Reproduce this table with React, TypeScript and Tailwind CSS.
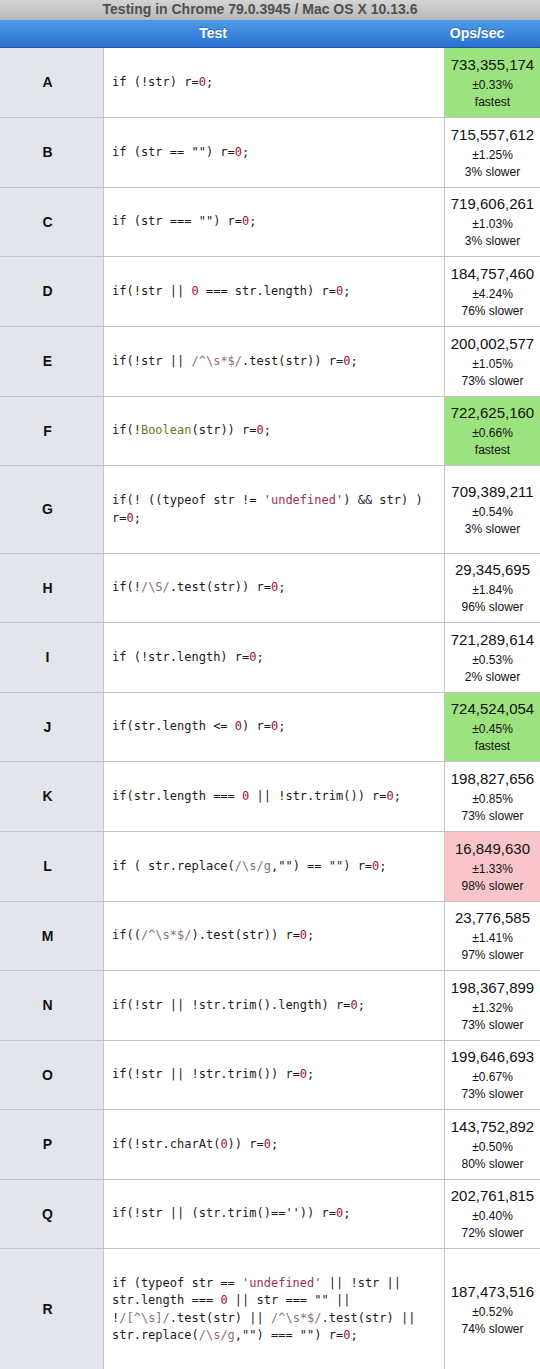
import React from 'react'

type Tok = [string, string?]

type Row = {
  id: string
  h: string
  code: Tok[][]
  ops: string
  err: string
  note: string
  tone?: 'best' | 'worst'
}

const Z = 'z'
const R = 'r'
const S = 's'
const B = 'b'

const rows: Row[] = [
  { id: 'A', h: 'h-[70px]', code: [[['if (!str) r='], ['0', Z], [';']]], ops: '733,355,174', err: '±0.33%', note: 'fastest', tone: 'best' },
  { id: 'B', h: 'h-[70px]', code: [[['if (str == "") r='], ['0', Z], [';']]], ops: '715,557,612', err: '±1.25%', note: '3% slower' },
  { id: 'C', h: 'h-[69px]', code: [[['if (str === "") r='], ['0', Z], [';']]], ops: '719,606,261', err: '±1.03%', note: '3% slower' },
  { id: 'D', h: 'h-[70px]', code: [[['if(!str || '], ['0', Z], [' === str.length) r='], ['0', Z], [';']]], ops: '184,757,460', err: '±4.24%', note: '76% slower' },
  { id: 'E', h: 'h-[70px]', code: [[['if(!str || '], ['/^\\s*$/', R], ['.test(str)) r='], ['0', Z], [';']]], ops: '200,002,577', err: '±1.05%', note: '73% slower' },
  { id: 'F', h: 'h-[69px]', code: [[['if(!'], ['Boolean', B], ['(str)) r='], ['0', Z], [';']]], ops: '722,625,160', err: '±0.66%', note: 'fastest', tone: 'best' },
  {
    id: 'G',
    h: 'h-[88px]',
    code: [
      [['if(! ((typeof str != '], ["'undefined'", S], [') && str) )']],
      [['r='], ['0', Z], [';']],
    ],
    ops: '709,389,211',
    err: '±0.54%',
    note: '3% slower',
  },
  { id: 'H', h: 'h-[69px]', code: [[['if(!'], ['/\\S/', R], ['.test(str)) r='], ['0', Z], [';']]], ops: '29,345,695', err: '±1.84%', note: '96% slower' },
  { id: 'I', h: 'h-[70px]', code: [[['if (!str.length) r='], ['0', Z], [';']]], ops: '721,289,614', err: '±0.53%', note: '2% slower' },
  { id: 'J', h: 'h-[69px]', code: [[['if(str.length <= '], ['0', Z], [') r='], ['0', Z], [';']]], ops: '724,524,054', err: '±0.45%', note: 'fastest', tone: 'best' },
  { id: 'K', h: 'h-[70px]', code: [[['if(str.length === '], ['0', Z], [' || !str.trim()) r='], ['0', Z], [';']]], ops: '198,827,656', err: '±0.85%', note: '73% slower' },
  { id: 'L', h: 'h-[70px]', code: [[['if ( str.replace('], ['/\\s/g', R], [',"") == "") r='], ['0', Z], [';']]], ops: '16,849,630', err: '±1.33%', note: '98% slower', tone: 'worst' },
  { id: 'M', h: 'h-[69px]', code: [[['if(('], ['/^\\s*$/', R], [').test(str)) r='], ['0', Z], [';']]], ops: '23,776,585', err: '±1.41%', note: '97% slower' },
  { id: 'N', h: 'h-[70px]', code: [[['if(!str || !str.trim().length) r='], ['0', Z], [';']]], ops: '198,367,899', err: '±1.32%', note: '73% slower' },
  { id: 'O', h: 'h-[69px]', code: [[['if(!str || !str.trim()) r='], ['0', Z], [';']]], ops: '199,646,693', err: '±0.67%', note: '73% slower' },
  { id: 'P', h: 'h-[70px]', code: [[['if(!str.charAt('], ['0', Z], [')) r='], ['0', Z], [';']]], ops: '143,752,892', err: '±0.50%', note: '80% slower' },
  { id: 'Q', h: 'h-[69px]', code: [[["if(!str || (str.trim()=='')) r="], ['0', Z], [';']]], ops: '202,761,815', err: '±0.40%', note: '72% slower' },
  {
    id: 'R',
    h: 'h-[122px]',
    code: [
      [['if (typeof str == '], ["'undefined'", S], [' || !str ||']],
      [['str.length === '], ['0', Z], [' || str === "" ||']],
      [['!'], ['/[^\\s]/', R], ['.test(str) || '], ['/^\\s*$/', R], ['.test(str) ||']],
      [['str.replace('], ['/\\s/g', R], [',"") === "") r='], ['0', Z], [';']],
    ],
    ops: '187,473,516',
    err: '±0.52%',
    note: '74% slower',
  },
]

const tokClass = (k?: string) =>
  k === Z
    ? 'text-[#9a1238]'
    : k === R
      ? 'text-[#8c6f80]'
      : k === S
        ? 'text-[#a3304e]'
        : k === B
          ? 'text-[#6f7a1c]'
          : 'text-[#1a1a1a]'

function Code({ lines }: { lines: Tok[][] }) {
  return (
    <div className="font-['DejaVu_Sans_Mono',monospace] text-[12px] leading-[17.5px] whitespace-pre">
      {lines.map((line, i) => (
        <div key={i}>
          {line.map(([t, k], j) => (
            <span key={j} className={tokClass(k)}>
              {t}
            </span>
          ))}
        </div>
      ))}
    </div>
  )
}

export default function App() {
  return (
    <div className="w-[540px] h-[1369px] overflow-hidden bg-white font-['Liberation_Sans',Arial,sans-serif]">
      <div className="h-[20px] bg-gradient-to-b from-[#d4d4d4] to-[#b8b8b8] flex items-end justify-center pr-[20px]">
        <span className="text-[14px] font-bold text-[#4f4f4f] leading-[17px] -translate-y-[2px]">
          Testing in Chrome 79.0.3945 / Mac OS X 10.13.6
        </span>
      </div>

      <div className="h-[28px] grid grid-cols-[444px_96px] bg-gradient-to-b from-[#4d9be9] to-[#2a70d0] border-b border-[#1a55a8] text-white font-bold text-[14px]">
        <div className="flex items-center justify-center pr-[18px] [text-shadow:0_-1px_0_rgba(0,0,0,0.25)]">Test</div>
        <div className="flex items-center justify-center pr-[30px] [text-shadow:0_-1px_0_rgba(0,0,0,0.25)]">Ops/sec</div>
      </div>

      {rows.map((row) => (
        <div
          key={row.id}
          className={`grid grid-cols-[104px_341px_95px] border-b border-[#c4c4c4] ${row.h}`}
        >
          <div className="bg-[#e2e6ec] border-r border-[#c4c4c4] flex items-center justify-center pr-[8px] text-[14px] font-bold text-[#111]">
            {row.id}
          </div>
          <div className="border-r border-[#c4c4c4] flex items-center pl-[8px]">
            <Code lines={row.code} />
          </div>
          <div
            className={`flex flex-col items-center justify-center text-[#111] ${
              row.tone === 'best' ? 'bg-[#9ce27e]' : row.tone === 'worst' ? 'bg-[#f8c5cb]' : 'bg-white'
            }`}
          >
            <span className="text-[15px] leading-[19px]">{row.ops}</span>
            <span className="text-[12px] leading-[17px] mt-[3px]">{row.err}</span>
            <span className="text-[12px] leading-[17px]">{row.note}</span>
          </div>
        </div>
      ))}
    </div>
  )
}
